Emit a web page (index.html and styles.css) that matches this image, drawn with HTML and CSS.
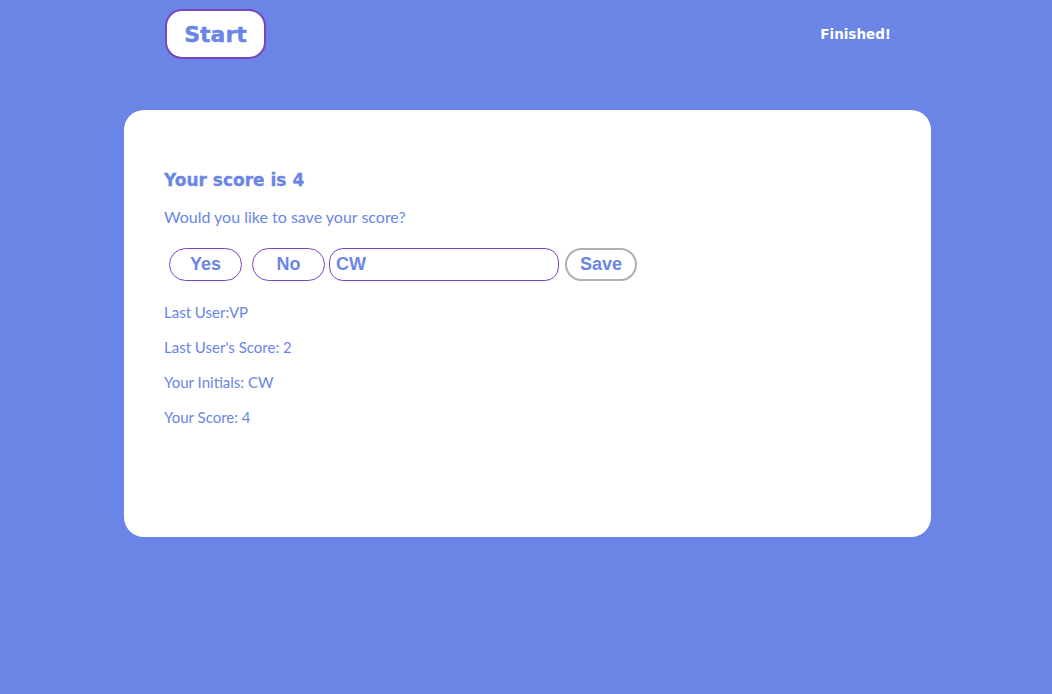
FILE: index.html
```html
<!DOCTYPE html>
<html>
<head>
<meta charset="utf-8">
<link rel="stylesheet" href="styles.css">
</head>
<body>
<div class="page">
  <header class="top">
    <button class="start">Start</button>
    <span class="finished">Finished!</span>
  </header>
  <main class="card">
    <h2 class="score">Your score is 4</h2>
    <p class="ask">Would you like to save your score?</p>
    <div class="actions">
      <button class="pill">Yes</button>
      <button class="pill">No</button>
      <input class="initials" type="text" value="CW">
      <button class="pill save">Save</button>
    </div>
    <ul class="stats">
      <li>Last User:VP</li>
      <li>Last User's Score: 2</li>
      <li>Your Initials: CW</li>
      <li>Your Score: 4</li>
    </ul>
  </main>
</div>
</body>
</html>
```
FILE: styles.css
```css
html, body {
  margin: 0;
  padding: 0;
  height: 100%;
}
body {
  background: #6a85e6;
  font-family: "Gill Sans", "Lato", "Open Sans", sans-serif;
  color: #6a85e6;
  padding-left: 3px;
}
.page {
  width: 807px;
  margin: 0 auto;
  padding-top: 9px;
}
.top {
  display: flex;
  justify-content: space-between;
  align-items: center;
  padding: 0 40px 0 41px;
  height: 50px;
}
.start {
  width: 101px;
  height: 50px;
  border: 2px solid #7a45c0;
  border-radius: 17px;
  background: #fff;
  color: #6a85e6;
  font-family: "DejaVu Sans", sans-serif;
  font-weight: bold;
  font-size: 22px;
  padding: 0;
  cursor: pointer;
  -webkit-text-stroke: 0.4px #6a85e6;
}
.finished {
  color: #fff;
  font-family: "DejaVu Sans", sans-serif;
  font-weight: bold;
  font-size: 13.5px;
}
.card {
  margin-top: 51px;
  background: #fff;
  border-radius: 20px;
  height: 427px;
  box-sizing: border-box;
  padding: 59px 40px 0 40px;
}
.score {
  margin: 0;
  font-family: "DejaVu Sans", sans-serif;
  font-weight: bold;
  font-size: 17px;
  line-height: 22px;
  -webkit-text-stroke: 0.3px #6a85e6;
}
.ask {
  margin: 17px 0 0 0;
  font-size: 16px;
  line-height: 18px;
}
.actions {
  display: flex;
  align-items: center;
  margin-top: 22px;
  padding-left: 5px;
}
.pill {
  width: 73px;
  height: 33px;
  border: 1px solid #7a45c0;
  border-radius: 17px;
  background: #fff;
  color: #6a85e6;
  font-family: "Liberation Sans", Arial, sans-serif;
  font-weight: bold;
  font-size: 18px;
  padding: 0;
  margin-right: 10px;
}
.initials {
  width: 230px;
  height: 33px;
  box-sizing: border-box;
  border: 1px solid #7a45c0;
  border-radius: 14px;
  color: #6a85e6;
  font-family: "Liberation Sans", Arial, sans-serif;
  font-weight: bold;
  font-size: 18px;
  padding: 0 6px;
  margin-left: -6px;
  margin-right: 6px;
  outline: none;
}
.pill.save {
  width: 72px;
  border: 2px solid #b0b0b0;
}
.stats {
  list-style: none;
  margin: 22px 0 0 0;
  padding: 0;
  font-size: 15px;
}
.stats li {
  line-height: 18px;
  margin-bottom: 17px;
}
```
